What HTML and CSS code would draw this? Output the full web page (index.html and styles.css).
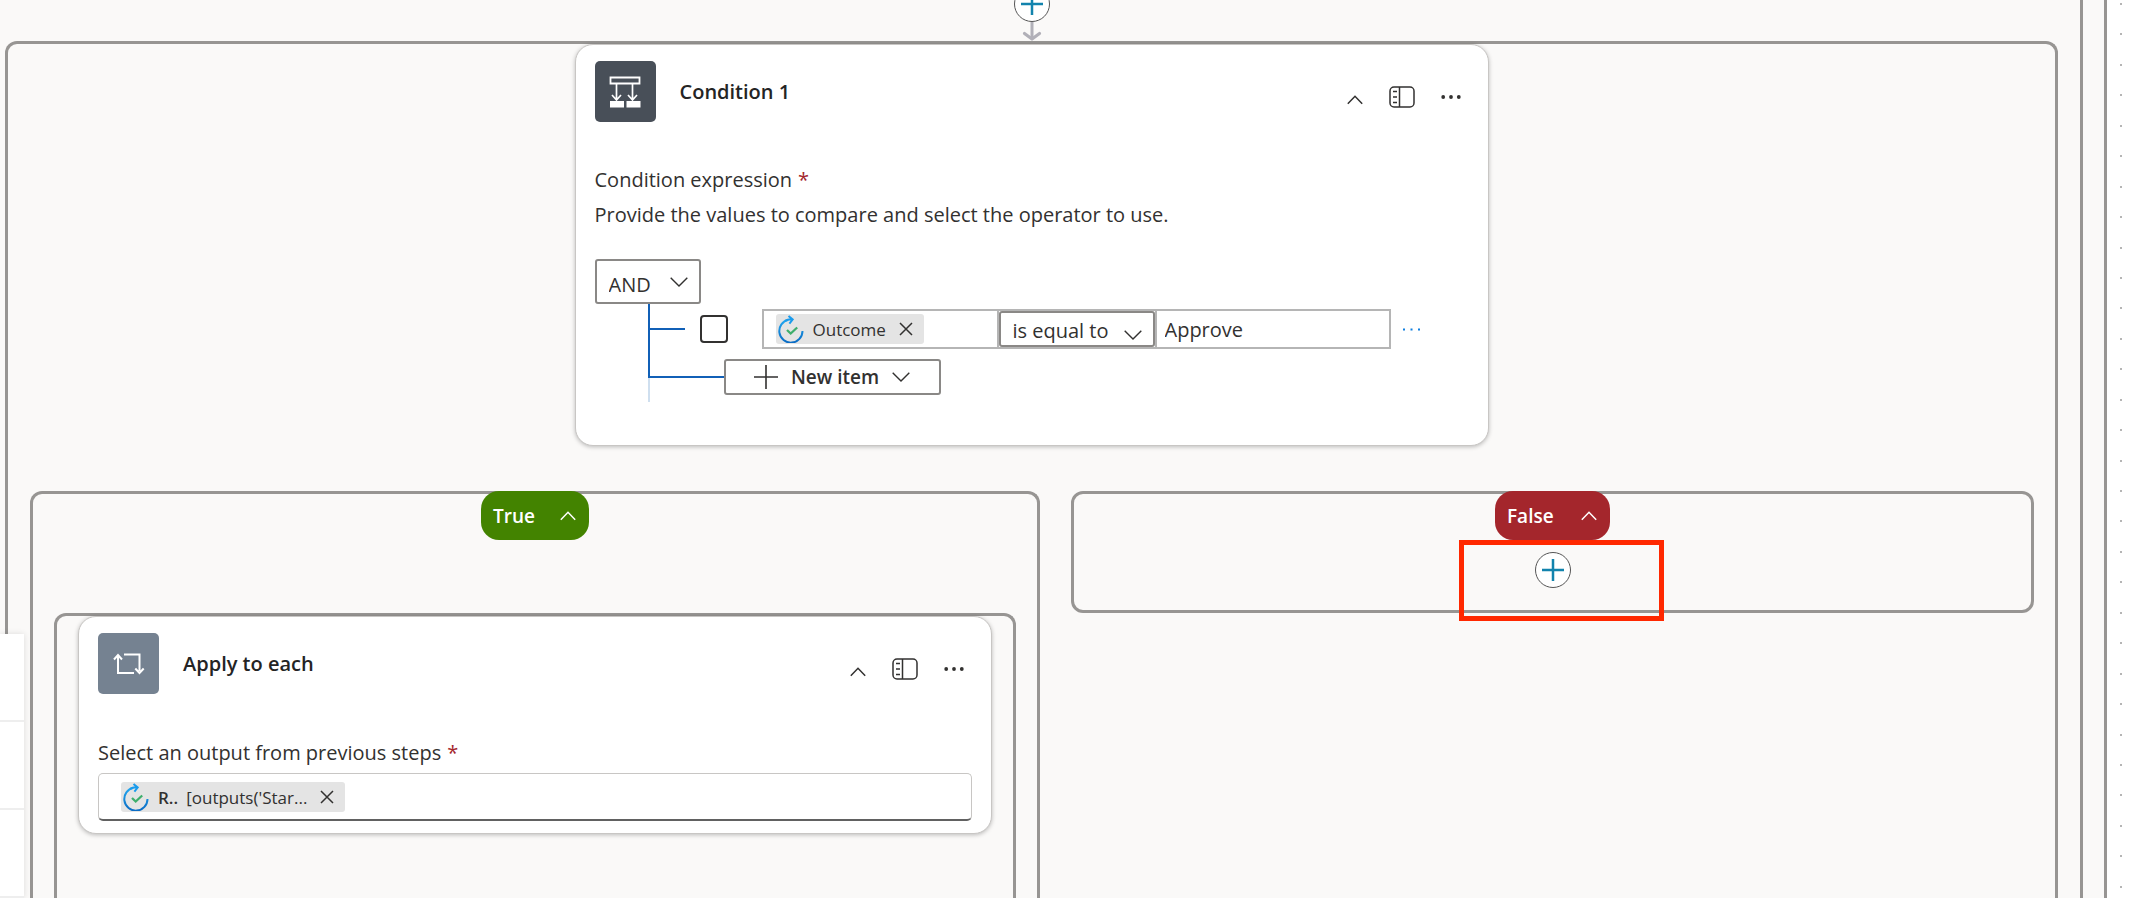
FILE: index.html
```html
<!DOCTYPE html>
<html lang="en">
<head>
<meta charset="utf-8">
<title>Flow designer</title>
<link rel="stylesheet" href="styles.css">
</head>
<body>
<svg width="0" height="0" class="sprite" aria-hidden="true">
  <symbol id="down" viewBox="0 0 18 10"><path d="M.7.7 9 9 17.300.7" fill="none" stroke="currentColor" stroke-width="1.400"/></symbol>
  <symbol id="up" viewBox="0 0 16 10"><path d="M.8 8.800 8 1.300l7.200 7.500" fill="none" stroke="currentColor" stroke-width="1.500"/></symbol>
  <symbol id="panel" viewBox="0 0 26 22"><rect x="1" y="1" width="24" height="20" rx="4" fill="none" stroke="currentColor" stroke-width="1.500"/><path d="M10.500 1v20M4 5.500h4M4 11h4M4 16.500h4" fill="none" stroke="currentColor" stroke-width="1.500"/></symbol>
  <symbol id="more" viewBox="0 0 20 4"><g fill="currentColor"><circle cx="2.200" cy="2" r="1.900"/><circle cx="10" cy="2" r="1.900"/><circle cx="17.800" cy="2" r="1.900"/></g></symbol>
  <symbol id="close" viewBox="0 0 14 14"><path d="M1 1l12 12M13 1 1 13" fill="none" stroke="currentColor" stroke-width="1.500"/></symbol>
  <symbol id="plus" viewBox="0 0 24 24"><path d="M12 0v24M0 12h24" fill="none" stroke="currentColor" stroke-width="1.600"/></symbol>
  <symbol id="add" viewBox="0 0 22 22"><path d="M11 0v22M0 11h22" fill="none" stroke="currentColor" stroke-width="2.500"/></symbol>
  <symbol id="approval" viewBox="0 0 26 28"><path d="M10.500 4.700A11.600 11.600 0 1 0 24.500 16" fill="none" stroke="url(#blue)" stroke-width="2"/><path d="M7 5.800C9 4.600 11 4.200 14.500 4.400M10.500 1l4.200 3.500-3.300 4.200" fill="none" stroke="#1a9bec" stroke-width="2"/><path d="M9 15l3.700 3.500 6.500-6" fill="none" stroke="#3fae6c" stroke-width="2.300"/></symbol>
  <defs><linearGradient id="blue" x1="0" y1="0" x2="0" y2="1"><stop offset="0" stop-color="#22a7f0"/><stop offset="1" stop-color="#0b6cc4"/></linearGradient></defs>
</svg>

<main class="canvas">
  <div class="scope scope-outer">
    <div class="scope scope-inner">
      <div class="connector">
        <button class="add" aria-label="Insert a new step"><svg width="22" height="22"><use href="#add"/></svg></button>
        <svg class="arrow" width="20" height="19" viewBox="0 0 20 19"><path d="M10 0v15" fill="none" stroke="#b1b0b8" stroke-width="3"/><path d="M2.500 11.500 10 17l7.500-5.500" fill="none" stroke="#b1b0b8" stroke-width="3.200" stroke-linecap="round" stroke-linejoin="round"/></svg>
      </div>

      <section class="group group-open condition">
        <article class="card">
          <header class="card-head">
            <span class="tile tile-dark"><svg width="32" height="32" viewBox="0 0 32 32"><path d="M1.500 1.500h29v6h-29z" fill="none" stroke="#fff" stroke-width="1.800"/><path d="M7.500 8v15M3 19l4.500 5 4.500-5M23.500 8v15M19 19l4.500 5 4.500-5" fill="none" stroke="#fff" stroke-width="1.700"/><path d="M1 25h14v6.500H1zM17.500 25h14v6.500h-14z" fill="#fff"/></svg></span>
            <h2>Condition 1</h2>
            <div class="tools">
              <button class="tool tool-up" aria-label="Collapse"><svg width="16" height="10"><use href="#up"/></svg></button>
              <button class="tool" aria-label="Open panel"><svg width="26" height="22"><use href="#panel"/></svg></button>
              <button class="tool" aria-label="More"><svg width="20" height="4"><use href="#more"/></svg></button>
            </div>
          </header>
          <p class="label">Condition expression<span class="req">*</span></p>
          <p class="hint">Provide the values to compare and select the operator to use.</p>

          <div class="builder">
            <div class="pick pick-and">
              <select aria-label="Group operator"><option>AND</option></select>
              <svg width="18" height="10"><use href="#down"/></svg>
            </div>
            <div class="tree">
              <div class="rail"></div>
              <div class="rows">
                <div class="row">
                  <span class="stub"></span>
                  <input class="tick" type="checkbox" aria-label="Select row">
                  <div class="fields">
                    <div class="cell"><span class="chip"><svg width="26" height="28"><use href="#approval"/></svg><span class="chip-text">Outcome</span><button class="remove" aria-label="Remove Outcome"><svg width="14" height="14"><use href="#close"/></svg></button></span></div>
                    <div class="pick pick-op">
                      <select aria-label="Comparison"><option>is equal to</option></select>
                      <svg width="18" height="10"><use href="#down"/></svg>
                    </div>
                    <input class="value" type="text" value="Approve" aria-label="Value">
                  </div>
                  <button class="row-more" aria-label="Row menu"><svg width="18" height="3" viewBox="0 0 18 3"><path d="M0 .5h2v2H0zM7.500.5h2v2h-2zM15 .5h2v2h-2z" fill="#0f7fe0"/></svg></button>
                </div>
                <div class="row row-new">
                  <span class="stub stub-long"></span>
                  <button class="new-item"><svg width="24" height="24"><use href="#plus"/></svg><span>New item</span><svg width="18" height="10"><use href="#down"/></svg></button>
                </div>
              </div>
            </div>
          </div>
        </article>

        <div class="branches">
          <section class="group group-open">
            <button class="pill pill-true">True<svg width="16" height="10"><use href="#up"/></svg></button>
            <section class="group group-open nested">
              <article class="card card-apply">
                <header class="card-head">
                  <span class="tile tile-slate"><svg width="32" height="22" viewBox="0 0 32 22"><path d="M11 1.500h15.500V18M21 20H5V3M1 6.500l4-4.500 4 4.500M22.300 15.500l4.200 4.500 4.200-4.500" fill="none" stroke="#fff" stroke-width="2"/></svg></span>
                  <h2>Apply to each</h2>
                  <div class="tools">
                    <button class="tool tool-up" aria-label="Collapse"><svg width="16" height="10"><use href="#up"/></svg></button>
                    <button class="tool" aria-label="Open panel"><svg width="26" height="22"><use href="#panel"/></svg></button>
                    <button class="tool" aria-label="More"><svg width="20" height="4"><use href="#more"/></svg></button>
                  </div>
                </header>
                <p class="label">Select an output from previous steps<span class="req">*</span></p>
                <div class="output"><span class="chip"><svg width="26" height="28"><use href="#approval"/></svg><span class="chip-text"><b>R..</b>[outputs('Star...</span><button class="remove" aria-label="Remove output"><svg width="14" height="14"><use href="#close"/></svg></button></span></div>
              </article>
            </section>
          </section>

          <section class="group false-branch">
            <button class="pill pill-false">False<svg width="16" height="10"><use href="#up"/></svg></button>
            <button class="add" aria-label="Insert a new step"><svg width="22" height="22"><use href="#add"/></svg></button>
            <div class="highlight"></div>
          </section>
        </div>
      </section>
    </div>
  </div>
  <div class="dots"><i></i><i></i><i></i><i></i><i></i><i></i><i></i><i></i><i></i><i></i><i></i><i></i><i></i><i></i><i></i><i></i><i></i><i></i><i></i><i></i><i></i><i></i><i></i><i></i><i></i><i></i><i></i><i></i><i></i><i></i></div>
  <div class="controls"><span></span><span></span><span></span></div>
</main>
</body>
</html>
```
FILE: styles.css
```css
* { box-sizing: border-box; }
body {
  margin: 0;
  font: 20px/28px "Open Sans", "Noto Sans", sans-serif;
  color: #323130;
  background: #fff;
}
.sprite { position: absolute; }
svg { display: block; flex: none; }
h2, p { margin: 0; }
button, input, select { font: inherit; color: inherit; margin: 0; padding: 0; border: 0; background: none; }

.canvas { position: relative; display: flex; min-height: 100vh; overflow: hidden; }
.scope { flex: 1; display: flex; flex-direction: column; border-right: 3px solid #979593; background: #faf9f8; min-width: 0; }
.scope-outer { padding-right: 21px; }
.scope-inner { padding: 0 22px 0 5px; }

.connector { display: flex; flex-direction: column; align-items: center; margin-top: -14px; }
.add {
  display: grid; place-items: center;
  width: 36px; height: 36px;
  border: 1px solid #555; border-radius: 50%;
  background: #fff; color: #1283ad;
}

.group {
  position: relative;
  display: flex; flex-direction: column; align-items: center;
  border: 3px solid #979593; border-radius: 12px;
  min-width: 0;
}
.group-open { border-bottom: 0; border-radius: 12px 12px 0 0; }
.condition, .nested { flex: 1; }

.card {
  width: 914px; max-width: 100%;
  padding: 16px 19px 43px;
  border: 1px solid #c8c6c4; border-radius: 18px;
  background: #fff;
  box-shadow: 0 1px 4px rgba(0, 0, 0, .25);
}
.card-apply { padding-bottom: 12px; }
.card-head { display: flex; align-items: center; }
.tile { display: grid; place-items: center; width: 61px; height: 61px; border-radius: 5px; }
.tile-dark { background: #484f58; }
.tile-slate { background: #758291; }
h2 { font-size: 20px; line-height: 28px; font-weight: 600; margin-left: 24px; color: #242424; }
.tools { display: flex; align-items: center; gap: 26px; margin: 11px 8px 0 auto; }
.tool-up { padding-top: 6px; }
.label { margin-top: 44px; line-height: 28px; }
.card-apply .label { margin-top: 45px; }
.req { color: #a4262c; margin-left: 6px; }
.hint { margin-top: 7px; line-height: 28px; }

.builder { margin-top: 30px; }
.pick { position: relative; display: flex; align-items: center; border: 2px solid #8a8886; border-radius: 3px; background: #fff; }
.pick select { width: 100%; height: 100%; appearance: none; outline: 0; }
.pick svg { position: absolute; right: 11px; pointer-events: none; }
.pick-and { width: 106px; height: 45px; }
.pick-and select { padding: 6px 0 0 12px; }
.pick-op { width: 156px; height: 36px; flex: none; }
.pick-op select { padding: 4px 0 0 12px; line-height: 24px; }
.pick-op svg { top: 17px; }

.tree { display: flex; margin-left: 53px; }
.rail { width: 2px; height: 98px; background: linear-gradient(#1160b7 74px, #cfdfef 74px); }
.rows { flex: 1; padding-top: 5px; }
.row { display: flex; align-items: center; }
.row-new { margin-top: 10px; }
.stub { width: 35px; height: 2px; background: #1160b7; }
.stub-long { width: 74px; }
.tick { appearance: none; width: 28px; height: 28px; margin-left: 15px; border: 2px solid #323130; border-radius: 4px; background: #fff; }
.fields { display: flex; align-items: center; width: 629px; height: 40px; margin-left: 34px; border: 2px solid #b5b5b5; }
.cell { flex: none; display: flex; align-items: center; width: 235px; height: 36px; padding-left: 12px; border-right: 2px solid #b5b5b5; }
.value { flex: 1; min-width: 0; height: 36px; padding-left: 8px; border-left: 2px solid #b5b5b5; }
.row-more { padding: 8px 0; margin-left: 12px; }

.chip { display: flex; align-items: center; height: 30px; padding: 0 11px 0 2px; border-radius: 3px; background: #e4e4e4; font-size: 17px; }
.chip-text { margin: 2px 13px 0 9px; line-height: 24px; }
.chip b { font-weight: 600; margin-right: 8px; }

.new-item { display: flex; align-items: center; justify-content: center; gap: 13px; width: 217px; height: 36px; border: 2px solid #8a8886; border-radius: 3px; background: #fff; font-size: 19px; font-weight: 600; }

.branches { flex: 1; align-self: stretch; display: grid; grid-template-columns: 1010fr 963fr; gap: 31px; padding: 45px 21px 0 22px; }
.pill {
  display: flex; align-items: center; justify-content: space-between;
  width: 108px; height: 49px; margin-top: -3px; padding: 0 13px 0 12px;
  border-radius: 18px; color: #fff; font-size: 19px; font-weight: 600; z-index: 1;
}
.pill-true { background: #438300; }
.pill-false { width: 115px; background: #a4262c; }
.nested { margin-top: 73px; width: calc(100% - 42px); }
.output { display: flex; align-items: center; height: 48px; margin-top: 6px; padding-left: 22px; border: 1px solid #c8c6c4; border-bottom: 2px solid #616161; border-radius: 5px; }

.false-branch { align-self: start; padding-bottom: 22px; }
.false-branch .add { margin-top: 12px; }
.highlight { position: absolute; top: 46px; left: calc(50% - 94px); width: 205px; height: 81px; border: 5px solid #ff2800; pointer-events: none; }

.dots { width: 39px; flex: none; display: flex; flex-direction: column; justify-content: space-between; padding: 3px 0 10px 13px; }
.dots i { width: 2px; height: 2px; background: #b5b5b5; }

.controls { position: absolute; left: 0; bottom: 0; width: 24px; background: #fff; box-shadow: 0 0 6px rgba(0, 0, 0, .12); }
.controls span { display: block; height: 88px; border-bottom: 2px solid #eee; }
```
